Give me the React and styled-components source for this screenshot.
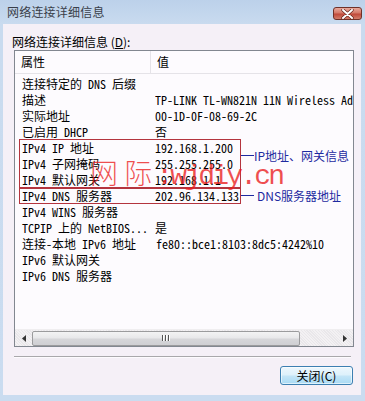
import React from "react";
import styled, { createGlobalStyle } from "styled-components";

const Global = createGlobalStyle`
  html, body { margin: 0; padding: 0; background: #c6d8ee; }
  * { box-sizing: border-box; }
`;

const MONO = `"Noto Sans Mono CJK SC", "Liberation Mono", "Noto Sans CJK SC", monospace`;
const UI = `"Noto Sans CJK SC", "Noto Sans", sans-serif`;

const Window = styled.div`
  width: 365px;
  height: 401px;
  display: flex;
  flex-direction: column;
  background: linear-gradient(180deg, #bcd1ea 0px, #c9dbef 24px, #cadcf0 100%);
  font-family: ${UI};
  color: #000;
  overflow: hidden;
`;

const TitleBar = styled.div`
  height: 24px;
  flex: none;
  display: flex;
  align-items: center;
  justify-content: space-between;
  padding: 0 3px 0 7px;
`;

const Title = styled.span`
  font-size: 12px;
  color: #3a3f4a;
  letter-spacing: 0.2px;
  padding-bottom: 1px;
`;

const CloseX = styled.div`
  width: 29px;
  height: 13px;
  margin-top: 3px;
  border: 1px solid #6f3128;
  border-radius: 3px;
  background: linear-gradient(180deg, #e9a99c 0%, #d47868 45%, #c0493a 55%, #d27c6a 100%);
  display: flex;
  align-items: center;
  justify-content: center;
`;

const Client = styled.div`
  flex: 1;
  margin: 0 4px 6px 3px;
  background: #f5f0f7;
  padding: 10px 8px 0 11px;
  display: flex;
  flex-direction: column;
`;

const Label = styled.div`
  height: 16px;
  line-height: 16px;
  font-size: 12px;
  padding-left: 0;
  margin-left: -2px;
  u { text-decoration: underline; }
`;

const ListBox = styled.div`
  width: 340px;
  height: 297px;
  border: 1px solid #828790;
  background: #fdfbfe;
  display: flex;
  flex-direction: column;
`;

const HeaderRow = styled.div`
  height: 23px;
  flex: none;
  display: flex;
  border-bottom: 1px solid #e5e3e8;
  background: #fdfbfe;
`;

const HeaderCell = styled.div`
  width: ${(p) => p.$w || "auto"};
  flex: ${(p) => (p.$w ? "none" : "1")};
  font-size: 12px;
  line-height: 22px;
  padding-left: 6px;
  border-right: ${(p) => (p.$divider ? "1px solid #e5e3e8" : "none")};
`;

const Body = styled.div`
  position: relative;
  flex: 1;
  padding-top: 1px;
  overflow: hidden;
`;

const Row = styled.div`
  height: 16px;
  display: flex;
  align-items: center;
  font-family: ${MONO};
  font-size: 12px;
  white-space: nowrap;
`;

const NameCell = styled.div`
  width: 140px;
  flex: none;
  padding-left: 7px;
  overflow: hidden;
`;

const ValueCell = styled.div`
  flex: 1;
  overflow: hidden;
  padding-left: ${(p) => p.$pad || 0}px;
`;

const RedBox = styled.div`
  position: absolute;
  left: 4px;
  width: 222px;
  border: 1px solid #b4343e;
`;

const Note = styled.div`
  position: absolute;
  left: 226px;
  display: flex;
  align-items: center;
  font-size: 12px;
  color: #1e2aa0;
  white-space: nowrap;
  font-family: ${UI};
`;

const NoteLine = styled.span`
  display: inline-block;
  width: 13px;
  height: 1px;
  background: #1e2aa0;
  margin-right: ${(p) => p.$gap}px;
`;

const Watermark = styled.div`
  position: absolute;
  left: 75px;
  top: 83px;
  font-family: "Liberation Mono", "Noto Sans CJK SC", monospace;
  font-size: 28px;
  line-height: 30px;
  color: rgba(235, 30, 30, 0.78);
  font-weight: 300;
  white-space: nowrap;
  pointer-events: none;
  span.cjk { font-family: "Noto Sans CJK SC", sans-serif; font-weight: 300; margin-right: 4px; }
  span.lat { letter-spacing: -2.8px; }
`;

const ScrollBar = styled.div`
  height: 17px;
  flex: none;
  display: flex;
  align-items: center;
  background: repeating-linear-gradient(45deg, #f3f1f3 0 1px, #e9e7ea 1px 2px);
  border-top: 1px solid #f0eef0;
`;

const Arrow = styled.div`
  width: 17px;
  height: 16px;
  display: flex;
  align-items: center;
  justify-content: center;
  flex: none;
`;

const Thumb = styled.div`
  flex: none;
  width: 268px;
  height: 15px;
  border: 1px solid #9b9b9d;
  border-radius: 2px;
  background: linear-gradient(180deg, #f3f3f4 0%, #e8e8ea 45%, #d6d6d9 55%, #cfcfd3 100%);
  display: flex;
  align-items: center;
  justify-content: center;
`;

const Grip = styled.div`
  display: flex;
  gap: 1px;
  span { display: block; width: 1px; height: 6px; background: #555; box-shadow: 1px 0 0 #fff; margin-right: 1px; }
`;

const Separator = styled.div`
  width: 337px;
  height: 2px;
  margin-top: 9px;
  border-top: 1px solid #a9a8ab;
  border-bottom: 1px solid #fdfbfe;
`;

const Footer = styled.div`
  display: flex;
  justify-content: flex-end;
  padding-top: 8px;
`;

const Button = styled.button`
  width: 73px;
  height: 19px;
  margin-right: 0px;
  border: 1px solid #3c7fb1;
  border-radius: 3px;
  background: linear-gradient(180deg, #edf7fd 0%, #def1fb 45%, #c3e5f7 55%, #a9daf4 100%);
  box-shadow: inset 0 0 0 1px rgba(255,255,255,0.6);
  font-family: ${UI};
  font-size: 12px;
  line-height: 15px;
  padding: 0;
  color: #000;
`;

const rows = [
  ["连接特定的 DNS 后缀", ""],
  ["描述", "TP-LINK TL-WN821N 11N Wireless Adapter"],
  ["实际地址", "00-1D-0F-08-69-2C"],
  ["已启用 DHCP", "否"],
  ["IPv4 IP 地址", "192.168.1.200"],
  ["IPv4 子网掩码", "255.255.255.0"],
  ["IPv4 默认网关", "192.168.1.1"],
  ["IPv4 DNS 服务器", "202.96.134.133"],
  ["IPv4 WINS 服务器", ""],
  ["TCPIP 上的 NetBIOS...", "是"],
  ["连接-本地 IPv6 地址", "fe80::bce1:8103:8dc5:4242%10", 1],
  ["IPv6 默认网关", ""],
  ["IPv6 DNS 服务器", ""],
];

export default function App() {
  return (
    <Window>
      <Global />
      <TitleBar>
        <Title>网络连接详细信息</Title>
        <CloseX>
          <svg width="13" height="10" viewBox="0 0 13 10">
            <path d="M2 1 L11 9 M11 1 L2 9" stroke="#5a1a12" strokeWidth="3.2" strokeLinecap="round" />
            <path d="M2 1 L11 9 M11 1 L2 9" stroke="#fff" strokeWidth="2" strokeLinecap="round" />
          </svg>
        </CloseX>
      </TitleBar>
      <Client>
        <Label>网络连接详细信息 (<u>D</u>):</Label>
        <ListBox>
          <HeaderRow>
            <HeaderCell $w="136px" $divider>属性</HeaderCell>
            <HeaderCell>值</HeaderCell>
          </HeaderRow>
          <Body>
            {rows.map(([k, v, pad]) => (
              <Row key={k}>
                <NameCell>{k}</NameCell>
                <ValueCell $pad={pad}>{v}</ValueCell>
              </Row>
            ))}
            <RedBox style={{ top: 65, height: 49 }} />
            <RedBox style={{ top: 114, height: 16 }} />
            <Note style={{ top: 73 }}>
              <NoteLine $gap={0} />IP地址、网关信息
            </Note>
            <Note style={{ top: 113 }}>
              <NoteLine $gap={3} />DNS服务器地址
            </Note>
            <Watermark>
              <span className="cjk">网 际</span><span className="lat">:wjdiy.cn</span>
            </Watermark>
          </Body>
          <ScrollBar>
            <Arrow>
              <svg width="4" height="7" viewBox="0 0 4 7"><path d="M4 0 L0 3.5 L4 7Z" fill="#333" /></svg>
            </Arrow>
            <Thumb>
              <Grip><span /><span /><span /></Grip>
            </Thumb>
            <div style={{ flex: 1 }} />
            <Arrow>
              <svg width="4" height="7" viewBox="0 0 4 7"><path d="M0 0 L4 3.5 L0 7Z" fill="#333" /></svg>
            </Arrow>
          </ScrollBar>
        </ListBox>
        <Separator />
        <Footer>
          <Button>关闭(C)</Button>
        </Footer>
      </Client>
    </Window>
  );
}
